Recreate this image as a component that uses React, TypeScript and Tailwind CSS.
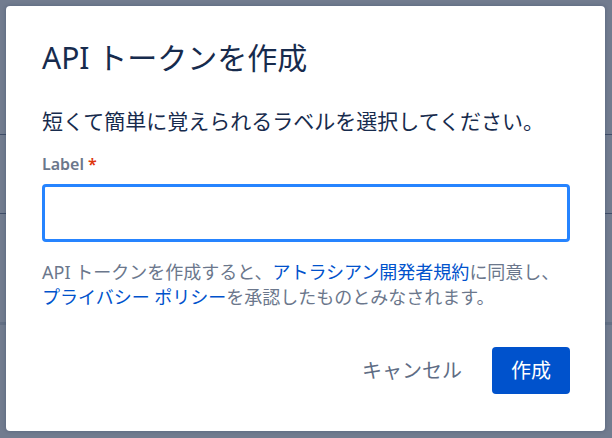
import React from "react";

const font = {
  fontFamily: '"Noto Sans", "Noto Sans CJK JP", sans-serif',
};

export default function App() {
  return (
    <div
      className="relative h-[438px] w-[612px] overflow-hidden bg-white text-[#172b4d]"
      style={font}
    >
      {/* Page behind the blanket */}
      <div className="flex flex-col pt-[134px]">
        <div className="border-t border-[#172b4d]" />
        <div className="mt-[78px] border-t border-[#172b4d]" />
        <div className="mt-[108px] border-t-[3px] border-[#c1c7d0]" />
      </div>

      {/* Blanket */}
      <div className="absolute inset-0 bg-[rgba(74,87,112,0.78)]" />

      {/* Modal */}
      <div className="absolute inset-0 pl-[6px] pt-[6px]">
        <div className="flex h-[425px] w-[599px] flex-col rounded-[4px] bg-white pl-[36px] pr-[35px] shadow-[0_0_4px_rgba(9,30,66,0.25)]">
          <h1 className="pt-[34px] text-[30px] leading-[36px] font-normal text-[#172b4d]">
            API トークンを作成
          </h1>

          <p className="mt-[31px] text-[21px] leading-[28px] text-[#172b4d]">
            短くて簡単に覚えられるラベルを選択してください。
          </p>

          <label className="mt-[18px] flex items-center text-[16px] leading-[22px] font-semibold text-[#6b778c]">
            Label
            <span className="ml-[4px] text-[#de350b]">*</span>
          </label>

          <input
            type="text"
            className="mt-[9px] h-[58px] w-full rounded-[4px] border-[3px] border-[#2684ff] bg-white px-[10px] text-[20px] outline-none"
          />

          <p className="mt-[18px] text-[18px] leading-[25px] text-[#6b778c]">
            API トークンを作成すると、
            <a className="text-[#0052cc]">アトラシアン開発者規約</a>
            に同意し、
            <br />
            <a className="text-[#0052cc]">プライバシー ポリシー</a>
            を承認したものとみなされます。
          </p>

          <div className="mt-auto mb-[37px] flex items-center justify-end gap-[14px]">
            <button className="h-[47px] rounded-[4px] px-[16px] text-[20px] text-[#5e6c84]">
              キャンセル
            </button>
            <button className="h-[47px] w-[78px] rounded-[4px] bg-[#0052cc] text-[20px] text-white">
              作成
            </button>
          </div>
        </div>
      </div>
    </div>
  );
}
